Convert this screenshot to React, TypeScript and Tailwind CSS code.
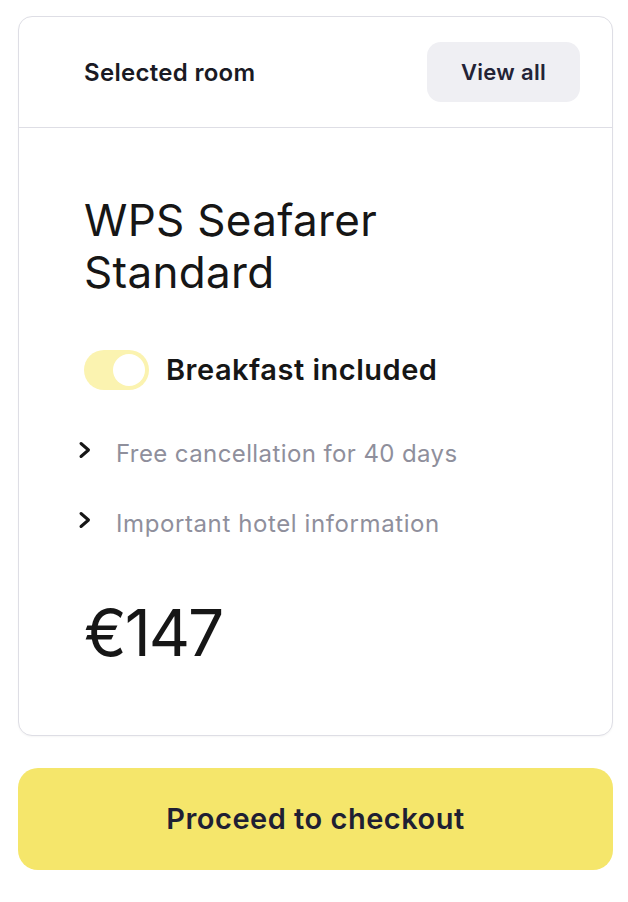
import { useState } from "react";

const font = { fontFamily: "Inter, 'Noto Sans', sans-serif" };

const Chevron = () => (
    <svg width="14" height="20" viewBox="0 0 14 20" className="shrink-0 mb-[8px]">
        <polyline points="3,3.5 10.5,10 3,16.5" fill="none" stroke="#161616" strokeWidth="3" strokeLinecap="round" strokeLinejoin="round" />
    </svg>
);

const App = () => {
    const [breakfast, setBreakfast] = useState(true);

    return (
        <div className="w-[628px] min-h-[902px] bg-white pl-[18px] pr-[15px] pt-[16px]" style={font}>
            {/* card */}
            <div className="border border-[#dedee5] rounded-[14px] shadow-[0_1px_2px_rgba(0,0,0,0.04)] bg-white">
                {/* header */}
                <div className="h-[111px] flex items-center justify-between pl-[65px] pr-[32px] border-b border-[#dedee5]">
                    <span className="text-[24px] leading-[32px] font-semibold text-[#1a1a24] tracking-[0.3px] mt-[2px]">Selected room</span>
                    <button className="w-[153px] h-[60px] rounded-[14px] bg-[#efeff3] text-[22px] font-semibold text-[#232336] tracking-[0.3px]">
                        View all
                    </button>
                </div>

                {/* body */}
                <div className="pl-[65px] pr-[32px] pt-[66px] pb-[70px]">
                    <h2 className="text-[44px] leading-[52px] font-normal text-[#161616] tracking-[0.3px]">
                        WPS Seafarer<br />Standard
                    </h2>

                    <div className="mt-[52px] h-[40px] flex items-center gap-[17px]">
                        <button
                            onClick={() => setBreakfast(!breakfast)}
                            className={`w-[65px] h-[40px] rounded-full p-[4px] flex items-center ${breakfast ? "bg-[#fbf3b0] justify-end" : "bg-[#e5e5ea] justify-start"}`}
                        >
                            <span className="w-[32px] h-[32px] rounded-full bg-white block" />
                        </button>
                        <span className="text-[29px] leading-[40px] font-semibold text-[#161616] tracking-[0.5px]">Breakfast included</span>
                    </div>

                    <div className="mt-[48px] flex items-center gap-[24px] h-[32px] -ml-[6px]">
                        <Chevron />
                        <span className="text-[24px] leading-[32px] text-[#8f8f9c] tracking-[0.4px]">Free cancellation for 40 days</span>
                    </div>
                    <div className="mt-[38px] flex items-center gap-[24px] h-[32px] -ml-[6px]">
                        <Chevron />
                        <span className="text-[24px] leading-[32px] text-[#8f8f9c] tracking-[0.6px]">Important hotel information</span>
                    </div>

                    <div className="mt-[61px] text-[64px] leading-[64px] text-[#161616] tracking-[-2px]">€147</div>
                </div>
            </div>

            {/* checkout */}
            <button className="mt-[32px] w-full h-[102px] rounded-[20px] bg-[#f5e66b] text-[29px] font-semibold text-[#1f1f33] tracking-[0.5px]">
                Proceed to checkout
            </button>
        </div>
    );
};

export default App;
